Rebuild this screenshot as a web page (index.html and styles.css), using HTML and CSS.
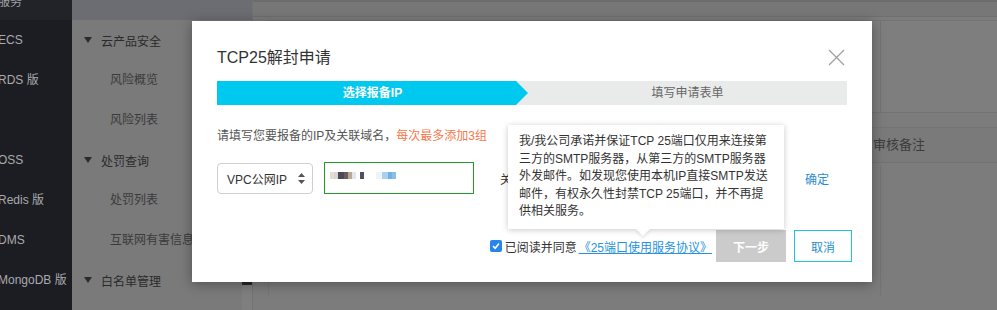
FILE: index.html
```html
<!DOCTYPE html>
<html lang="zh-CN">
<head>
    <meta charset="UTF-8">
    <title>TCP25解封申请</title>
    <link rel="stylesheet" href="styles.css">
</head>
<body>
    <div class="page">
        <aside class="sidebar">
            <div class="side-head">服务</div>
            <div class="side-item">ECS</div>
            <div class="side-item">RDS 版</div>
            <div class="side-item"></div>
            <div class="side-item">OSS</div>
            <div class="side-item">Redis 版</div>
            <div class="side-item">DMS</div>
            <div class="side-item">MongoDB 版</div>
        </aside>

        <nav class="subnav">
            <div class="subnav-top"></div>
            <div class="group"><span class="caret"></span>云产品安全</div>
            <div class="sub-item">风险概览</div>
            <div class="sub-item">风险列表</div>
            <div class="group"><span class="caret"></span>处罚查询</div>
            <div class="sub-item">处罚列表</div>
            <div class="sub-item">互联网有害信息</div>
            <div class="group"><span class="caret"></span>白名单管理</div>
            <div class="collapse-tab"></div>
        </nav>

        <main class="main">
            <div class="main-top"></div>
            <div class="content">
                <div class="card">
                    <div class="card-col"></div>
                    <div></div>
                </div>
                <div class="thead">
                    <div></div>
                    <div class="th-note">审核备注</div>
                </div>
                <div class="tbody">
                    <div class="card-col"></div>
                    <div></div>
                </div>
            </div>
        </main>
    </div>

    <div class="dialog">
        <div class="dialog-title">TCP25解封申请</div>
        <span class="dialog-close">
            <svg width="17" height="17" viewBox="0 0 17 17"><path d="M1 1L16 16M16 1L1 16" stroke="#a0a0a0" stroke-width="1.3" fill="none"/></svg>
        </span>

        <div class="steps">
            <div class="step step-active">选择报备IP</div>
            <div class="step">填写申请表单</div>
        </div>

        <div class="hint">请填写您要报备的IP及关联域名，<span class="hint-warn">每次最多添加3组</span></div>

        <div class="form-row">
            <div class="select">
                <span>VPC公网IP</span>
                <svg width="7" height="11" viewBox="0 0 7 11"><path d="M3.5 0L7 4H0z M3.5 11L0 7h7z" fill="#555"/></svg>
            </div>
            <div class="ip-input"><span class="ip-value"></span></div>
            <span class="field-label">关联域名</span>
            <div class="domain-input"></div>
            <a class="confirm">确定</a>
        </div>

        <div class="footer">
            <label class="agree">
                <span class="checkbox">
                    <svg width="8" height="8" viewBox="0 0 8 8"><path d="M1 4.2L3.2 6.3L7 1.6" stroke="#fff" stroke-width="1.6" fill="none"/></svg>
                </span>
                已阅读并同意<a class="agree-link">《25端口使用服务协议》</a>
            </label>
            <button class="btn btn-next">下一步</button>
            <button class="btn btn-cancel">取消</button>
        </div>

        <div class="tooltip">我/我公司承诺并保证TCP 25端口仅用来连接第三方的SMTP服务器，从第三方的SMTP服务器外发邮件。如发现您使用本机IP直接SMTP发送邮件，有权永久性封禁TCP 25端口，并不再提供相关服务。</div>
    </div>
</body>
</html>
```

FILE: styles.css
```css
body {
    margin: 0;
    font-family: "Liberation Sans", "Noto Sans CJK SC", sans-serif;
    font-size: 12px;
    background: #7c7c7c;
    overflow: hidden;
}
.page {
    display: flex;
    height: 310px;
    overflow: hidden;
}

/* left product menu */
.sidebar {
    width: 72px;
    flex-shrink: 0;
    background: #1c1d22;
    overflow: hidden;
}
.side-head {
    height: 20px;
    line-height: 4px;
    background: #222328;
    color: #9fa0a4;
    overflow: hidden;
    text-indent: -2px;
}
.side-item {
    height: 40px;
    line-height: 40px;
    color: #a9aaae;
    white-space: nowrap;
    text-indent: -2px;
}

/* second level menu */
.subnav {
    position: relative;
    width: 180px;
    flex-shrink: 0;
    background: #7a7a7a;
}
.subnav-top {
    height: 20px;
    background: #6c6d72;
}
.group {
    display: flex;
    align-items: center;
    height: 40px;
    padding-left: 12px;
    color: #2b2b2b;
}
.caret {
    width: 0;
    height: 0;
    border-left: 4.5px solid transparent;
    border-right: 4.5px solid transparent;
    border-top: 6px solid #2b2b2b;
    margin-right: 9px;
}
.sub-item {
    height: 40px;
    line-height: 40px;
    padding-left: 38px;
    color: #3a3a3a;
    white-space: nowrap;
}
.collapse-tab {
    position: absolute;
    right: 0;
    top: 282px;
    width: 10px;
    height: 28px;
    background: linear-gradient(#26272b 0 3px, #7f7f7f 3px);
}

/* page behind the mask */
.main {
    flex: 1;
    border-left: 1px solid #727272;
}
.main-top {
    height: 14px;
    background: #777777;
    border-top: 2px solid #6c6c6c;
    border-bottom: 1px solid #6f6f6f;
}
.content {
    padding: 3px 0 0 15px;
}
.card {
    display: grid;
    grid-template-columns: 612px 1fr;
    height: 91px;
    background: #7e7e7e;
    border-top: 1px solid #747474;
    border-bottom: 1px solid #737373;
    border-left: 1px solid #757575;
    margin-bottom: 14px;
}
.card-col {
    border-right: 1px solid #747474;
}
.thead {
    display: grid;
    grid-template-columns: 604px 1fr;
    height: 34px;
    line-height: 34px;
    border-top: 1px solid #747474;
    border-bottom: 1px solid #727272;
    border-left: 1px solid #757575;
    background: #7a7a7a;
    color: #3c3c3c;
    font-size: 13px;
}
.tbody {
    display: grid;
    grid-template-columns: 612px 1fr;
    height: 130px;
    margin-top: 3px;
    border-left: 1px solid #757575;
}

/* dialog */
.dialog {
    position: absolute;
    left: 192px;
    top: 21px;
    width: 635px;
    height: 261px;
    padding: 0 20px 0 25px;
    background: #fff;
    box-shadow: 0 2px 12px rgba(0, 0, 0, 0.35);
}
.dialog-title {
    padding-top: 26px;
    line-height: 22px;
    font-size: 16px;
    color: #333;
}
.dialog-close {
    position: absolute;
    left: 636px;
    top: 28px;
    line-height: 0;
}
.steps {
    display: flex;
    height: 24px;
    margin: 12px 5px 0 0;
    background: #e9eaea;
}
.step {
    flex: 1;
    line-height: 24px;
    text-align: center;
    color: #666;
}
.step-active {
    flex: 0 0 311px;
    background: #00c9ef;
    color: #fff;
    font-weight: bold;
    clip-path: polygon(0 0, calc(100% - 12px) 0, 100% 50%, calc(100% - 12px) 100%, 0 100%);
}
.hint {
    margin-top: 22px;
    line-height: 18px;
    color: #555;
}
.hint-warn {
    color: #f7774a;
}
.form-row {
    display: flex;
    align-items: center;
    margin-top: 17px;
    padding-right: 23px;
}
.select {
    display: flex;
    align-items: center;
    justify-content: space-between;
    box-sizing: border-box;
    width: 96px;
    height: 31px;
    padding: 0 7px 0 9px;
    border: 1px solid #cfcfcf;
    border-radius: 4px;
    color: #333;
}
.ip-input {
    box-sizing: border-box;
    width: 150px;
    height: 32px;
    margin-left: 11px;
    padding: 9px 0 0 5px;
    border: 1px solid #229a2a;
}
.ip-value {
    display: block;
    width: 81px;
    height: 7px;
    background: linear-gradient(90deg,
        #e4ddd6 0 4px, #ddd6d0 4px 8px, #4b4a58 8px 14px, #6a5e58 14px 18px,
        #b9a898 18px 22px, #e4e4ee 22px 26px, #ffffff 26px 30px, #4d4f66 30px 34px,
        #ffffff 34px 46px, #eef4fa 46px 52px, #a9d2f2 52px 58px, #6fb2e6 58px 62px,
        #8cbde6 62px 66px, #ffffff 66px);
}
.field-label {
    margin-left: 26px;
    color: #333;
}
.domain-input {
    flex: 1;
    height: 30px;
    margin: 0 25px 0 8px;
    border: 1px solid #ccc;
}
.confirm {
    color: #2a8bd0;
}
.footer {
    display: flex;
    align-items: center;
    justify-content: flex-end;
    margin-top: 36px;
}
.agree {
    display: flex;
    align-items: center;
    color: #333;
}
.checkbox {
    display: flex;
    align-items: center;
    justify-content: center;
    width: 12px;
    height: 12px;
    margin-right: 3px;
    border-radius: 2px;
    background: #2684ea;
}
.agree-link {
    margin-left: 2px;
    color: #2893dc;
    text-decoration: underline;
}
.btn {
    height: 32px;
    border: none;
    font-family: inherit;
    font-size: 12px;
    padding: 0;
}
.btn-next {
    width: 70px;
    margin-left: 4px;
    background: #cbcbcb;
    color: #fff;
    font-weight: bold;
}
.btn-cancel {
    width: 58px;
    margin-left: 8px;
    background: #fff;
    border: 1px solid #22c3df;
    color: #2790c9;
}
.tooltip {
    position: absolute;
    left: 316px;
    top: 104px;
    width: 254px;
    padding: 8px 11px;
    background: #fff;
    color: #333;
    line-height: 17.5px;
    box-shadow: 0 1px 6px rgba(0, 0, 0, 0.22);
}
.tooltip::after {
    content: "";
    position: absolute;
    left: 130px;
    bottom: -5px;
    width: 10px;
    height: 10px;
    background: #fff;
    transform: rotate(45deg);
    box-shadow: 2px 2px 3px rgba(0, 0, 0, 0.08);
}
```
